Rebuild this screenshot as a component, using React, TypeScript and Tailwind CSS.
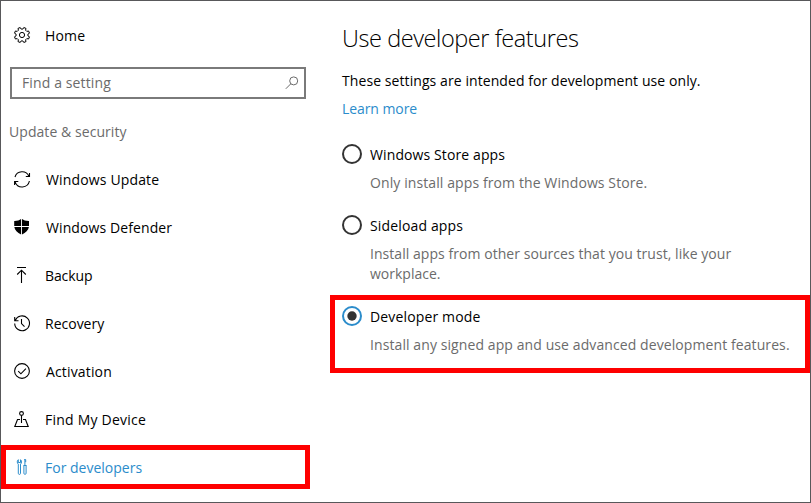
import type { ReactNode } from "react";

function Icon({ children, className = "" }: { children: ReactNode; className?: string }) {
  return (
    <svg viewBox="0 0 16 16" fill="none" stroke="currentColor" strokeWidth="1.1" className={`h-4 w-4 shrink-0 overflow-visible ${className}`}>
      {children}
    </svg>
  );
}

// Outline of an eight-tooth cog, centred on (8, 8).
function cogPoints() {
  const profile: [number, number][] = [
    [-14, 6],
    [-9, 7.7],
    [9, 7.7],
    [14, 6],
  ];
  return Array.from({ length: 8 }, (_, tooth) =>
    profile.map(([angle, radius]) => {
      const a = ((tooth * 45 + 22.5 + angle) * Math.PI) / 180;
      return `${(8 + radius * Math.cos(a)).toFixed(2)},${(8 + radius * Math.sin(a)).toFixed(2)}`;
    }).join(" "),
  ).join(" ");
}

const gear = (
  <g strokeWidth="1">
    <polygon points={cogPoints()} strokeLinejoin="round" />
    <circle cx="8" cy="8" r="2.6" />
  </g>
);
const sync = <path d="M1 6A7.400 7.400 0 0 1 14.900 5.200M15.500 1.900v3.600h-3.700M15.400 10A7.400 7.400 0 0 1 1.100 10.800M.6 14.100v-3.600h3.700" />;
const shield = (
  <g fill="currentColor" stroke="none">
    <path d="M.2 2C3 2.100 5.500 1.300 7.100.1V7.100H.2zM8 .1C9.700 1.300 12.200 2.100 15 2v5.100H8zM.3 8h6.800v7.500C3.300 13.500.8 11.200.3 8zM8 8h6.900c-.5 3.200-3.100 5.500-6.900 7.500z" />
  </g>
);
const backup = <path d="M3 .5h9M7.500 3.300V16M3.200 7.500l4.300-4.300 4.300 4.300" />;
const recovery = <path d="M1.300 5.400A7.400 7.400 0 1 1 .7 8.500M.7 2.100v3.700h3.800M7.500 4v4.600l3 3" />;
const activation = (
  <>
    <circle cx="8" cy="8" r="7.400" />
    <path d="M4.200 8.200l2.700 2.600 5-5.100" />
  </>
);
const device = (
  <>
    <circle cx="7.500" cy="2.500" r="1.900" />
    <path d="M7.500 4.400v7.600M6 8.500H3.500L.8 15.500h13.400L11.500 8.500H9" />
  </>
);
const tools = (
  <path d="M4.300.7C2.900 1.400 2.900 4.300 4.300 5.100v9.200c0 1.500 2.200 1.500 2.200 0V5.100C7.900 4.300 7.900 1.400 6.500.7v2.800H4.300zM10.900.3v6.200M9.500 6.500h3M9.900 6.500v7.800c0 1.400 2.200 1.400 2.200 0V6.500M10.200.6h1.500v2.600" strokeWidth="1" />
);

const items = [
  { label: "Windows Update", icon: sync, text: "ml-4 tracking-[0.15px]" },
  { label: "Windows Defender", icon: shield, text: "ml-4 tracking-[0.1px]" },
  { label: "Backup", icon: backup, text: "ml-[15px] tracking-[-0.1px]" },
  { label: "Recovery", icon: recovery, text: "ml-[15px]" },
  { label: "Activation", icon: activation, text: "ml-4 tracking-[0.15px]" },
  { label: "Find My Device", icon: device, text: "ml-[15px] tracking-[0.22px]" },
];

function Radio({ checked = false }: { checked?: boolean }) {
  return (
    <svg viewBox="0 0 20 20" className={`h-5 w-5 shrink-0 ${checked ? "text-[#2b8ccb]" : "text-[#333]"}`}>
      <circle cx="10" cy="10" r="9" fill="none" stroke="currentColor" strokeWidth="2" />
      {checked && <circle cx="10" cy="10" r="4.700" fill="#333" />}
    </svg>
  );
}

export default function App() {
  return (
    <div className="relative flex h-[503px] w-[811px] overflow-hidden border border-[#58585a] bg-white font-['Open_Sans','Noto_Sans',sans-serif] text-sm leading-5 whitespace-nowrap text-black">
      <aside className="w-[329px] shrink-0 pt-[10px]">
        <div className="flex h-12 items-center pl-[13px]">
          <Icon>{gear}</Icon>
          <span className="mt-0.5 ml-[15px] tracking-[0.15px]">Home</span>
        </div>
        <div className="mt-2 ml-[9px] flex h-8 w-[296px] items-center justify-between border-2 border-[#7a7a7a] pr-[5px] pl-2.5 text-[#6b6b6b]">
          <span className="tracking-[0.12px]">Find a setting</span>
          <svg viewBox="0 0 14 14" className="h-3.5 w-3.5" fill="none" stroke="currentColor">
            <circle cx="8.700" cy="4.900" r="4" />
            <path d="M5.800 7.800L.8 12.800" />
          </svg>
        </div>
        <div className="mt-[23px] pl-2 tracking-[0.06px] text-[#6b6b6b]">Update &amp; security</div>
        <nav className="mt-[13px]">
          {items.map((item) => (
            <div key={item.label} className="flex h-12 items-center pl-[13px]">
              <Icon>{item.icon}</Icon>
              <span className={`mt-0.5 ${item.text}`}>{item.label}</span>
            </div>
          ))}
          <div className="flex h-12 items-center pl-[13px] text-[#2b8ccb]">
            <Icon>{tools}</Icon>
            <span className="mt-0.5 ml-[15px]">For developers</span>
          </div>
        </nav>
      </aside>
      <main className="flex-1 pt-[21px] pl-3">
        <h1 className="text-[23.5px] leading-8 font-light tracking-[-0.43px]">Use developer features</h1>
        <p className="mt-[17px] tracking-[0.08px]">These settings are intended for development use only.</p>
        <p className="mt-2 tracking-[-0.08px] text-[#2b8ccb]">Learn more</p>
        <div className="mt-[25px] flex h-5 items-center gap-2">
          <Radio />
          <span className="mt-0.5 tracking-[0.11px]">Windows Store apps</span>
        </div>
        <p className="mt-[9px] pl-7 tracking-[0.1px] text-[#6b6b6b]">Only install apps from the Windows Store.</p>
        <div className="mt-[22px] flex h-5 items-center gap-2">
          <Radio />
          <span className="mt-0.5 tracking-[0.15px]">Sideload apps</span>
        </div>
        <p className="mt-[9px] pl-7 text-[#6b6b6b]">
          <span className="tracking-[0.05px]">Install apps from other sources that you trust, like your</span>
          <br />
          <span>workplace.</span>
        </p>
        <div className="mt-[22px] flex h-5 items-center gap-2">
          <Radio checked />
          <span className="mt-0.5 tracking-[0.15px]">Developer mode</span>
        </div>
        <p className="mt-[9px] pl-7 tracking-[0.09px] text-[#6b6b6b]">Install any signed app and use advanced development features.</p>
      </main>
      <div className="absolute top-[444px] left-0 h-[44px] w-[309px] border-5 border-[#fe0000]" />
      <div className="absolute top-[294px] left-[329px] h-[78px] w-[480px] border-5 border-[#fe0000]" />
    </div>
  );
}
